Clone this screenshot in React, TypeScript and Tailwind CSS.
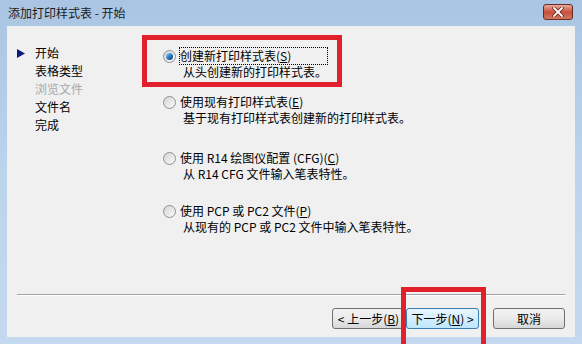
import React from 'react'

const font = { fontFamily: '"Noto Sans CJK SC", "Noto Sans", sans-serif' }

function Radio({ checked }: { checked?: boolean }) {
  return (
    <span className="mt-[1.5px] flex h-[13px] w-[13px] shrink-0 items-center justify-center rounded-full border border-[#8e8f8f] bg-gradient-to-br from-[#d5d5d5] to-[#fafafa]">
      {checked && (
        <span className="h-[7px] w-[7px] rounded-full bg-gradient-to-br from-[#9ed4f5] via-[#2a7cc0] to-[#0d3f7a]" />
      )}
    </span>
  )
}

function Option({
  checked,
  title,
  hotkey,
  desc,
  className = '',
}: {
  checked?: boolean
  title: string
  hotkey: string
  desc: string
  className?: string
}) {
  return (
    <div className={`flex items-start ${className}`}>
      <Radio checked={checked} />
      <div className="ml-[4px] text-[12px] leading-[16px] text-black">
        <div className={checked ? 'outline outline-1 outline-dotted outline-black' : ''}>
          {title}(<span className="underline">{hotkey}</span>)
        </div>
        <div className="ml-[3px]">{desc}</div>
      </div>
    </div>
  )
}

function Button({
  children,
  primary,
  className = '',
}: {
  children: React.ReactNode
  primary?: boolean
  className?: string
}) {
  return (
    <button
      className={`flex h-[21px] items-center justify-center rounded-[3px] border text-[12px] leading-none text-black ${
        primary
          ? 'border-[#3c7fb1] bg-gradient-to-b from-[#eaf6fd] to-[#bee6fd]'
          : 'border-[#707070] bg-gradient-to-b from-[#f2f2f2] via-[#ebebeb] to-[#d6d6d6]'
      } ${className}`}
    >
      {children}
    </button>
  )
}

export default function App() {
  const steps = ['开始', '表格类型', '浏览文件', '文件名', '完成']

  return (
    <div
      className="relative h-[344px] w-[582px] overflow-hidden bg-gradient-to-b from-[#a9c5e3] via-[#bcd4ec] to-[#c4d9ef]"
      style={font}
    >
      {/* title bar */}
      <div className="flex h-[26px] items-center justify-between pl-[8px] pr-[9px]">
        <span className="text-[12px] text-[#1b1b1b]">添加打印样式表 - 开始</span>
        <button className="mt-[-3px] flex h-[16px] w-[30px] items-center justify-center rounded-[3px] border border-[#6b2a22] bg-gradient-to-b from-[#e9a99c] via-[#c7503a] to-[#d1775f]">
          <svg width="12" height="10" viewBox="0 0 12 10">
            <path d="M2 1 L10 9 M10 1 L2 9" stroke="#5a1a12" strokeWidth="3.2" strokeLinecap="square" />
            <path d="M2 1 L10 9 M10 1 L2 9" stroke="#ffffff" strokeWidth="1.8" strokeLinecap="square" />
          </svg>
        </button>
      </div>

      {/* client area */}
      <div className="mx-[7px] flex h-[311px] flex-col bg-[#f0f0f0]">
        <div className="flex flex-1">
          <div className="w-[156px] pl-[10px] pt-[18px]">
            {steps.map((s, i) => (
              <div key={s} className="flex h-[18px] items-center">
                <span className="w-[18px]">
                  {i === 0 && (
                    <svg width="8" height="9" viewBox="0 0 8 9">
                      <path d="M0 0 L8 4.5 L0 9 Z" fill="#0a1a78" />
                    </svg>
                  )}
                </span>
                <span className={`text-[12px] ${i === 2 ? 'text-[#a8a8a8]' : 'text-black'}`}>{s}</span>
              </div>
            ))}
          </div>
          <div className="pt-[22px]">
            <Option checked title="创建新打印样式表" hotkey="S" desc="从头创建新的打印样式表。" />
            <Option className="mt-[14px]" title="使用现有打印样式表" hotkey="E" desc="基于现有打印样式表创建新的打印样式表。" />
            <Option className="mt-[24px]" title="使用 R14 绘图仪配置 (CFG)" hotkey="C" desc="从 R14 CFG 文件输入笔表特性。" />
            <Option className="mt-[21px]" title="使用 PCP 或 PC2 文件" hotkey="P" desc="从现有的 PCP 或 PC2 文件中输入笔表特性。" />
          </div>
        </div>

        <div className="mx-[10px] h-[2px] border-t border-b border-t-[#a0a0a0] border-b-white" />

        <div className="mt-[12px] mb-[8px] flex justify-end pr-[10px]">
          <Button className="w-[73px]">
            &lt; 上一步(<span className="underline">B</span>)
          </Button>
          <Button primary className="ml-[1px] w-[73px]">
            下一步(<span className="underline">N</span>) &gt;
          </Button>
          <Button className="ml-[14px] w-[72px]">取消</Button>
        </div>
      </div>

      {/* annotation boxes */}
      <div className="absolute left-[142px] top-[35px] h-[52px] w-[200px] border-[5px] border-[#e0202a]" />
      <div className="absolute left-[401px] top-[287px] h-[62px] w-[85px] border-[5px] border-[#e0202a]" />
    </div>
  )
}
